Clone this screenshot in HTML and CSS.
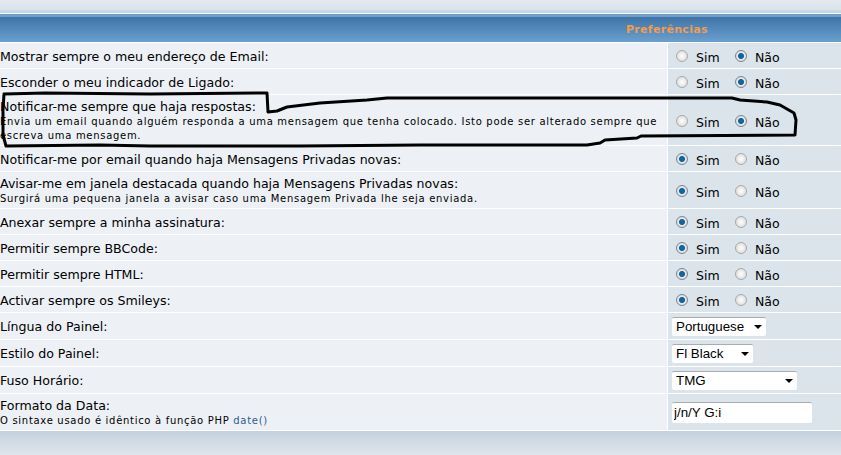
FILE: index.html
```html
<!DOCTYPE html>
<html lang="pt">
<head>
<meta charset="utf-8">
<title>Preferências</title>
<link rel="stylesheet" href="styles.css">
</head>
<body>
<div class="top-band"></div>
<table class="prefs">
<colgroup><col class="col-l"><col class="col-r"></colgroup>
<tr class="head"><th colspan="2"><span class="head-title">Preferências</span></th></tr>
<tr class="r26"><td class="lbl"><span class="gen">Mostrar sempre o meu endereço de Email:</span></td><td class="opt"><span class="radios"><label><i class="radio"></i>Sim</label><label><i class="radio on"></i>Não</label></span></td></tr>
<tr class="r26"><td class="lbl"><span class="gen">Esconder o meu indicador de Ligado:</span></td><td class="opt"><span class="radios"><label><i class="radio"></i>Sim</label><label><i class="radio on"></i>Não</label></span></td></tr>
<tr class="r51"><td class="lbl"><span class="gen">Notificar-me sempre que haja respostas:</span><br><span class="small">Envia um email quando alguém responda a uma mensagem que tenha colocado. Isto pode ser alterado sempre que escreva uma mensagem.</span></td><td class="opt"><span class="radios"><label><i class="radio"></i>Sim</label><label><i class="radio on"></i>Não</label></span></td></tr>
<tr class="r26"><td class="lbl"><span class="gen">Notificar-me por email quando haja Mensagens Privadas novas:</span></td><td class="opt"><span class="radios"><label><i class="radio on"></i>Sim</label><label><i class="radio"></i>Não</label></span></td></tr>
<tr class="r37"><td class="lbl"><span class="gen">Avisar-me em janela destacada quando haja Mensagens Privadas novas:</span><br><span class="small">Surgirá uma pequena janela a avisar caso uma Mensagem Privada lhe seja enviada.</span></td><td class="opt"><span class="radios"><label><i class="radio on"></i>Sim</label><label><i class="radio"></i>Não</label></span></td></tr>
<tr class="r26"><td class="lbl"><span class="gen">Anexar sempre a minha assinatura:</span></td><td class="opt"><span class="radios"><label><i class="radio on"></i>Sim</label><label><i class="radio"></i>Não</label></span></td></tr>
<tr class="r26"><td class="lbl"><span class="gen">Permitir sempre BBCode:</span></td><td class="opt"><span class="radios"><label><i class="radio on"></i>Sim</label><label><i class="radio"></i>Não</label></span></td></tr>
<tr class="r26"><td class="lbl"><span class="gen">Permitir sempre HTML:</span></td><td class="opt"><span class="radios"><label><i class="radio on"></i>Sim</label><label><i class="radio"></i>Não</label></span></td></tr>
<tr class="r26"><td class="lbl"><span class="gen">Activar sempre os Smileys:</span></td><td class="opt"><span class="radios"><label><i class="radio on"></i>Sim</label><label><i class="radio"></i>Não</label></span></td></tr>
<tr class="r27"><td class="lbl"><span class="gen">Língua do Painel:</span></td><td class="opt"><span class="select w-lang">Portuguese<b class="arrow"></b></span></td></tr>
<tr class="r27"><td class="lbl"><span class="gen">Estilo do Painel:</span></td><td class="opt"><span class="select w-style">Fl Black<b class="arrow"></b></span></td></tr>
<tr class="r27"><td class="lbl"><span class="gen">Fuso Horário:</span></td><td class="opt"><span class="select w-tz">TMG<b class="arrow"></b></span></td></tr>
<tr class="r37"><td class="lbl"><span class="gen">Formato da Data:</span><br><span class="small">O sintaxe usado é idêntico à função PHP <a href="#">date()</a></span></td><td class="opt"><input class="text" type="text" value="j/n/Y G:i"></td></tr>
</table>
<svg class="scribble" width="841" height="455" viewBox="0 0 841 455"><path d="M4 94 L45 93 L150 94 L267 93 L268 112 L277 111 L287 107 L320 103 L367 100 L387 98 L732 98 L740 100 L767 102 L780 105 L794 113 L796 120 L795 135 L641 136 L637 138 L605 140 L600 143 L587 145 L420 145 L300 146 L150 146 L100 145 L6 146 L3 135 L3 110 Z"/></svg>
</body>
</html>
```
FILE: styles.css
```css
html, body { margin: 0; padding: 0; }
body {
  width: 841px;
  height: 455px;
  overflow: hidden;
  position: relative;
  background: linear-gradient(#c3d1de 431px, #dfe6ec 455px);
  font-family: "DejaVu Sans", Verdana, sans-serif;
  color: #000;
}
.top-band {
  height: 13px;
  background: linear-gradient(#e3e9ef, #d9e2ea 10px, #c6d7e5 10px);
  border-bottom: 1px solid #fff;
}
.prefs {
  width: 841px;
  border-collapse: separate;
  border-spacing: 0;
  table-layout: fixed;
}
.col-l { width: 667px; }
.col-r { width: 174px; }
.prefs td, .prefs th { padding: 0; box-sizing: border-box; font-size: 12px; line-height: 14px; }
.prefs .lbl { padding-top: 2px; }
.prefs .head th { padding: 2px 0 0 626px; }
.head th {
  height: 29px;
  background: linear-gradient(#6ea0c9 0, #6ea0c9 3px, #3f74a8 3px, #6aa0cf 100%);
  border-bottom: 1px solid #fff;
  text-align: left;
}
.head-title {
  font-size: 11px;
  font-weight: bold;
  letter-spacing: .3px;
  color: #f49b4c;
}
.lbl {
  background: #edf1f5;
  border-bottom: 1px solid #fff;
  vertical-align: middle;
}
.opt {
  background: #dbe4eb;
  border-left: 1px solid #fff;
  border-bottom: 1px solid #fff;
  vertical-align: middle;
}
.gen { font-size: 12.6px; line-height: 14px; color: #000; }
.small {
  display: inline-block;
  margin-top: 1px;
  font-size: 10px;
  letter-spacing: .7px;
  line-height: 14px;
  color: #000;
}
.small a { color: #2c5a94; text-decoration: none; }
.r26 td { height: 26px; }
.r27 td { height: 27px; }
.r37 td { height: 37px; }
.r51 td { height: 51px; }
.radios {
  display: grid;
  grid-template-columns: 59px 59px;
  padding: 4px 0 0 8px;
  font-size: 12.5px;
  color: #000;
}
.radios label { display: flex; align-items: center; gap: 8px; padding-top: 1px; }
.radio {
  width: 12px;
  height: 12px;
  margin-top: -4px;
  box-sizing: border-box;
  border-radius: 50%;
  background: radial-gradient(circle, #fff, #d4d4d4);
  border: 1px solid #a9a9a9;
}
.radio.on {
  background: radial-gradient(circle, #0f6fae 0, #0b5f9a 2.5px, #e8e8e8 3.5px, #d0d0d0 100%);
  border-color: #7b8690;
}
.select {
  display: inline-flex;
  align-items: center;
  justify-content: space-between;
  box-sizing: border-box;
  height: 19px;
  margin-left: 4px;
  padding: 0 4px 0 4px;
  background: #fff;
  border-top: 1px solid #a9adb2;
  border-radius: 2px;
  font-family: "Liberation Sans", Arial, sans-serif;
  font-size: 13.33px;
  vertical-align: middle;
}
.w-lang { width: 94px; }
.w-style { width: 81px; }
.w-tz { width: 125px; }
.arrow {
  width: 0;
  height: 0;
  border-left: 4px solid transparent;
  border-right: 4px solid transparent;
  border-top: 4px solid #000;
}
.text {
  display: block;
  box-sizing: border-box;
  width: 140px;
  height: 21px;
  margin: 0 0 0 4px;
  padding: 0 2px;
  background: #fff;
  border: 0;
  border-top: 1px solid #a9adb2;
  border-radius: 2px;
  font-family: "Liberation Sans", Arial, sans-serif;
  font-size: 13.33px;
  color: #000;
}
.scribble {
  position: absolute;
  left: 0;
  top: 0;
  pointer-events: none;
}
.scribble path {
  fill: none;
  stroke: #000;
  stroke-width: 3;
  stroke-linejoin: round;
}
```
